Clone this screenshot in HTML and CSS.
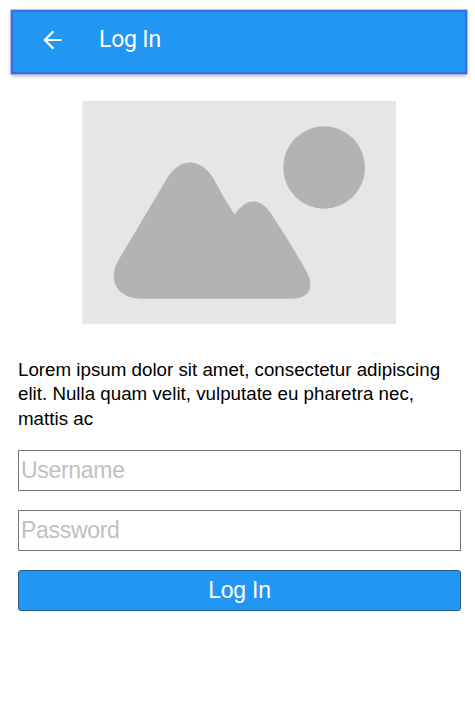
FILE: index.html
```html
<!DOCTYPE html>
<html lang="en">
<head>
<meta charset="utf-8">
<title>Log In</title>
<link rel="stylesheet" href="styles.css">
</head>
<body>
<header class="bar">
  <svg class="back" viewBox="0 0 20 20"><path d="M18.500 10H2M10.400 1.400L1.800 10l8.600 8.600"/></svg>
  <h1 class="title">Log In</h1>
</header>
<main class="content">
  <svg class="picture" viewBox="82 101 314 223">
    <path class="backdrop" d="M82.3 101H396V323.7H82.3z"/>
    <path class="shape" d="M142 298.7C117 298.7 107 280 118.500 260L167 178.500C180 157 200 157 213.500 178.500L223 196L234.600 214.600C246 197.500 260 197 271 213.500L289 241.500L305.500 269.500C316 288 309 298.700 291 298.700z"/>
    <ellipse class="shape" cx="324.100" cy="167.500" rx="40.900" ry="41.200"/>
  </svg>
  <p class="intro">Lorem ipsum dolor sit amet, consectetur adipiscing elit. Nulla quam velit, vulputate eu pharetra nec, mattis ac</p>
  <form class="form">
    <input class="field" type="text" placeholder="Username" aria-label="Username">
    <input class="field" type="password" placeholder="Password" aria-label="Password">
    <button class="submit" type="button">Log In</button>
  </form>
</main>
</body>
</html>
```
FILE: styles.css
```css
* { box-sizing: border-box; }
body {
  margin: 0;
  padding: 10px 8px 0 11px;
  background: #fff;
  color: #000;
  font-family: "Liberation Sans", Arial, sans-serif;
}
.bar {
  display: flex;
  align-items: center;
  height: 64px;
  padding: 0 0 4px 29.500px;
  background: #2196f3;
  border: 2px solid #4169e1;
  box-shadow: 0 0 0 .6px #8fa7ed, 0 2px 4px rgba(0, 0, 0, .3);
}
.back {
  width: 20px;
  height: 20px;
  fill: none;
  stroke: #fff;
  stroke-width: 2.2;
}
.title {
  margin: 0 0 0 36.500px;
  color: #fff;
  font: 400 23px/28px Roboto, sans-serif;
  letter-spacing: -.2px;
}
.content { padding: 27px 6px 0 7px; }
.picture {
  display: block;
  width: 314px;
  height: 223px;
  margin-left: 64px;
}
.backdrop { fill: #e6e6e6; }
.shape { fill: #b3b3b3; }
.intro {
  margin: 33.500px 0 18.500px;
  font-size: 18.750px;
  line-height: 24.500px;
}
.form {
  display: flex;
  flex-direction: column;
  gap: 19px;
  width: 443px;
}
.field, .submit {
  display: block;
  width: 100%;
  height: 41px;
  margin: 0;
  font: 23px/28px "Liberation Sans", Arial, sans-serif;
  outline: none;
}
.field {
  padding: 0 2px;
  border: 1px solid #767676;
  background: #fff;
  letter-spacing: -.3px;
}
.field::placeholder { color: #c0c0c0; opacity: 1; }
.submit {
  padding: 0;
  border: 1px solid #285d8c;
  border-radius: 3px;
  background: #2196f3;
  color: #fff;
  letter-spacing: -.2px;
}
```
